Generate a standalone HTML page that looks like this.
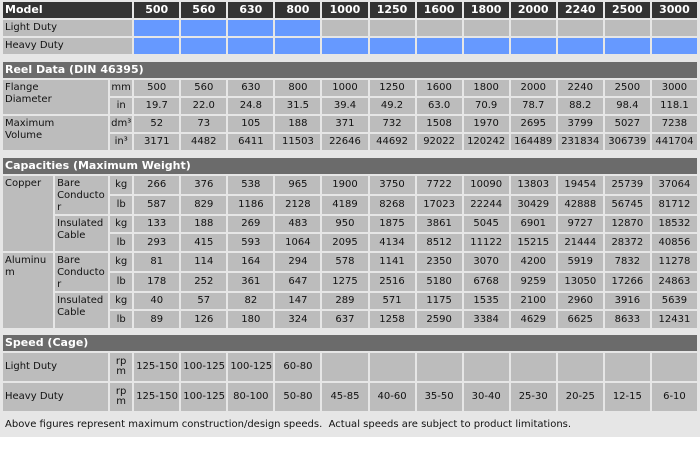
<!DOCTYPE html>
<html><head><meta charset="utf-8"><style>
body{margin:0;background:#fff;}
#w{width:700px;height:437px;background:#e6e6e6;overflow:hidden;}
table{border-collapse:separate;border-spacing:2px;table-layout:fixed;width:698px;margin-left:1px;margin-top:0px;font-family:"DejaVu Sans","Liberation Sans",sans-serif;font-size:10px;color:#111;}
td{background:#bcbcbc;padding:0 2px;overflow:hidden;white-space:nowrap;text-align:center;line-height:12px;}
td.l{text-align:left;white-space:normal;}
tr.h td{background:#333;color:#fff;font-weight:bold;font-size:11px;}
tr.s td{background:#6b6b6b;color:#fff;font-weight:bold;font-size:11px;text-align:left;}
td.b{background:#6699ff;}
tr.g td{background:none;padding:0;line-height:0;font-size:0;}
td.u{padding:0;font-size:10px;}
tr.f td{background:none;text-align:left;}
</style></head><body><div id="w"><table>
<colgroup><col style="width:50px"><col style="width:53px"><col style="width:22px"><col span="12" style="width:45px"></colgroup>
<tr class="h" style="height:16px"><td colspan="3" class="l">Model</td><td>500</td><td>560</td><td>630</td><td>800</td><td>1000</td><td>1250</td><td>1600</td><td>1800</td><td>2000</td><td>2240</td><td>2500</td><td>3000</td></tr>
<tr style="height:16px"><td colspan="3" class="l">Light Duty</td><td class="b"></td><td class="b"></td><td class="b"></td><td class="b"></td><td></td><td></td><td></td><td></td><td></td><td></td><td></td><td></td></tr>
<tr style="height:16px"><td colspan="3" class="l">Heavy Duty</td><td class="b"></td><td class="b"></td><td class="b"></td><td class="b"></td><td class="b"></td><td class="b"></td><td class="b"></td><td class="b"></td><td class="b"></td><td class="b"></td><td class="b"></td><td class="b"></td></tr>
<tr class="g" style="height:4px"><td colspan="15"></td></tr>
<tr class="s" style="height:16px"><td colspan="15">Reel Data (DIN 46395)</td></tr>
<tr style="height:16px"><td colspan="2" rowspan="2" class="l" style="vertical-align:top;padding-top:2px">Flange<br>Diameter</td><td class="u">mm</td><td>500</td><td>560</td><td>630</td><td>800</td><td>1000</td><td>1250</td><td>1600</td><td>1800</td><td>2000</td><td>2240</td><td>2500</td><td>3000</td></tr>
<tr style="height:16px"><td class="u">in</td><td>19.7</td><td>22.0</td><td>24.8</td><td>31.5</td><td>39.4</td><td>49.2</td><td>63.0</td><td>70.9</td><td>78.7</td><td>88.2</td><td>98.4</td><td>118.1</td></tr>
<tr style="height:16px"><td colspan="2" rowspan="2" class="l" style="vertical-align:top;padding-top:2px">Maximum<br>Volume</td><td class="u">dm³</td><td>52</td><td>73</td><td>105</td><td>188</td><td>371</td><td>732</td><td>1508</td><td>1970</td><td>2695</td><td>3799</td><td>5027</td><td>7238</td></tr>
<tr style="height:16px"><td class="u">in³</td><td>3171</td><td>4482</td><td>6411</td><td>11503</td><td>22646</td><td>44692</td><td>92022</td><td>120242</td><td>164489</td><td>231834</td><td>306739</td><td>441704</td></tr>
<tr class="g" style="height:4px"><td colspan="15"></td></tr>
<tr class="s" style="height:16px"><td colspan="15">Capacities (Maximum Weight)</td></tr>
<tr style="height:17px"><td rowspan="4" class="l" style="vertical-align:top;padding-top:2px">Copper</td><td rowspan="2" class="l" style="vertical-align:top;padding-top:2px">Bare Conducto r</td><td class="u">kg</td><td>266</td><td>376</td><td>538</td><td>965</td><td>1900</td><td>3750</td><td>7722</td><td>10090</td><td>13803</td><td>19454</td><td>25739</td><td>37064</td></tr>
<tr style="height:17px"><td class="u">lb</td><td>587</td><td>829</td><td>1186</td><td>2128</td><td>4189</td><td>8268</td><td>17023</td><td>22244</td><td>30429</td><td>42888</td><td>56745</td><td>81712</td></tr>
<tr style="height:16px"><td rowspan="2" class="l" style="vertical-align:top;padding-top:2px">Insulated Cable</td><td class="u">kg</td><td>133</td><td>188</td><td>269</td><td>483</td><td>950</td><td>1875</td><td>3861</td><td>5045</td><td>6901</td><td>9727</td><td>12870</td><td>18532</td></tr>
<tr style="height:17px"><td class="u">lb</td><td>293</td><td>415</td><td>593</td><td>1064</td><td>2095</td><td>4134</td><td>8512</td><td>11122</td><td>15215</td><td>21444</td><td>28372</td><td>40856</td></tr>
<tr style="height:17px"><td rowspan="4" class="l" style="vertical-align:top;padding-top:2px">Aluminu m</td><td rowspan="2" class="l" style="vertical-align:top;padding-top:2px">Bare Conducto r</td><td class="u">kg</td><td>81</td><td>114</td><td>164</td><td>294</td><td>578</td><td>1141</td><td>2350</td><td>3070</td><td>4200</td><td>5919</td><td>7832</td><td>11278</td></tr>
<tr style="height:17px"><td class="u">lb</td><td>178</td><td>252</td><td>361</td><td>647</td><td>1275</td><td>2516</td><td>5180</td><td>6768</td><td>9259</td><td>13050</td><td>17266</td><td>24863</td></tr>
<tr style="height:16px"><td rowspan="2" class="l" style="vertical-align:top;padding-top:2px">Insulated Cable</td><td class="u">kg</td><td>40</td><td>57</td><td>82</td><td>147</td><td>289</td><td>571</td><td>1175</td><td>1535</td><td>2100</td><td>2960</td><td>3916</td><td>5639</td></tr>
<tr style="height:17px"><td class="u">lb</td><td>89</td><td>126</td><td>180</td><td>324</td><td>637</td><td>1258</td><td>2590</td><td>3384</td><td>4629</td><td>6625</td><td>8633</td><td>12431</td></tr>
<tr class="g" style="height:3px"><td colspan="15"></td></tr>
<tr class="s" style="height:16px"><td colspan="15">Speed (Cage)</td></tr>
<tr style="height:28px"><td colspan="2" class="l">Light Duty</td><td class="u" style="line-height:10px">rp<br>m</td><td>125-150</td><td>100-125</td><td>100-125</td><td>60-80</td><td></td><td></td><td></td><td></td><td></td><td></td><td></td><td></td></tr>
<tr style="height:28px"><td colspan="2" class="l">Heavy Duty</td><td class="u" style="line-height:10px">rp<br>m</td><td>125-150</td><td>100-125</td><td>80-100</td><td>50-80</td><td>45-85</td><td>40-60</td><td>35-50</td><td>30-40</td><td>25-30</td><td>20-25</td><td>12-15</td><td>6-10</td></tr>
<tr class="f" style="height:24px"><td colspan="15">Above figures represent maximum construction/design speeds.&nbsp; Actual speeds are subject to product limitations.</td></tr>
</table></div></body></html>
